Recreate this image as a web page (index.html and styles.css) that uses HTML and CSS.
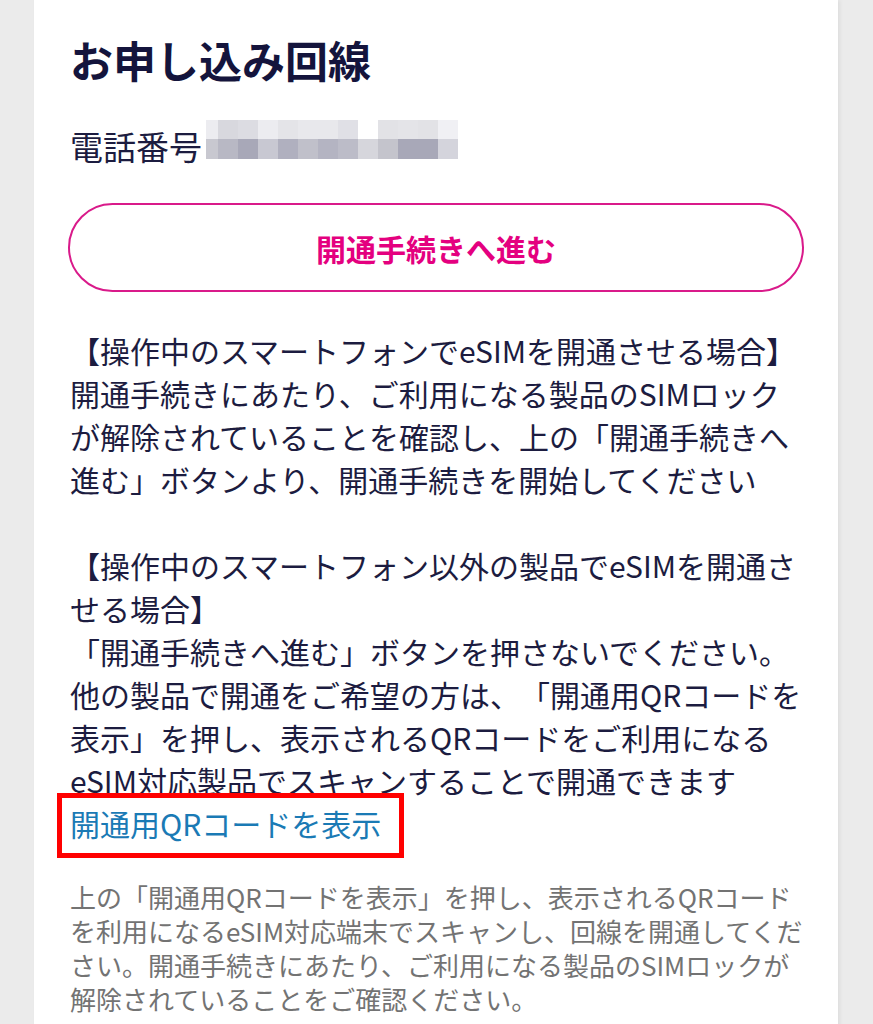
FILE: index.html
```html
<!DOCTYPE html>
<html lang="ja">
<head>
<meta charset="utf-8">
<title>お申し込み回線</title>
<link rel="stylesheet" href="styles.css">
</head>
<body>
<main class="card">
  <h1 class="title">お申し込み回線</h1>
  <div class="phone">
    <span class="phone-label">電話番号</span>
    <span class="redact" aria-hidden="true">
      <i style="background:#ececf0"></i><i style="background:#d8d8de"></i><i style="background:#dcdce2"></i><i style="background:#ececf0"></i><i style="background:#e4e4e8"></i><i style="background:#e8e8ec"></i><i style="background:#e8e8ec"></i><i style="background:#e0e0e6"></i><i style="background:#ffffff"></i><i style="background:#e2e2e6"></i><i style="background:#e4e4e8"></i><i style="background:#e2e2e6"></i><i style="background:#f0f0f4"></i>
      <i style="background:#c8c8d0"></i><i style="background:#b8b8c4"></i><i style="background:#a8a8b8"></i><i style="background:#c8c8d2"></i><i style="background:#b0b0bf"></i><i style="background:#c0c0ca"></i><i style="background:#b4b4c2"></i><i style="background:#bcbcc8"></i><i style="background:#d6d6dc"></i><i style="background:#c4c4cc"></i><i style="background:#a8a8b8"></i><i style="background:#a8a8b8"></i><i style="background:#d4d4dc"></i>
    </span>
  </div>
  <button class="btn" type="button">開通手続きへ進む</button>
  <div class="body">
    <p>【操作中のスマートフォンでeSIMを開通させる場合】<br>開通手続きにあたり、ご利用になる製品のSIMロックが解除されていることを確認し、上の「開通手続きへ進む」ボタンより、開通手続きを開始してください</p>
    <p>【操作中のスマートフォン以外の製品でeSIMを開通させる場合】<br>「開通手続きへ進む」ボタンを押さないでください。他の製品で開通をご希望の方は、「開通用QRコードを表示」を押し、表示されるQRコードをご利用になるeSIM対応製品でスキャンすることで開通できます<br><a class="link" href="#">開通用QRコードを表示</a></p>
  </div>
  <p class="note">上の「開通用QRコードを表示」を押し、表示されるQRコードを利用になるeSIM対応端末でスキャンし、回線を開通してください。開通手続きにあたり、ご利用になる製品のSIMロックが解除されていることをご確認ください。</p>
</main>
</body>
</html>
```

FILE: styles.css
```css
html, body {
  margin: 0;
  padding: 0;
}
body {
  background: #ebebeb;
  font-family: "Noto Sans CJK JP", "Noto Sans", sans-serif;
  color: #1c1c40;
  overflow: hidden;
  height: 1024px;
  text-spacing-trim: space-all;
}
.card {
  margin-left: 34px;
  width: 804px;
  min-height: 1100px;
  box-sizing: border-box;
  background: #ffffff;
  padding: 32px 34px 0 36px;
  box-shadow: 2px 0 4px rgba(0,0,0,0.06);
}
.title {
  margin: 0;
  font-size: 43px;
  line-height: 55px;
  font-weight: 700;
  color: #14143c;
}
.phone {
  margin-top: 37px;
  display: flex;
  align-items: center;
  height: 44px;
}
.phone-label {
  font-size: 33px;
  line-height: 44px;
  color: #1c1c40;
}
.redact {
  margin-left: 4px;
  display: grid;
  grid-template-columns: 12px repeat(12, 20px);
  grid-template-rows: 19px 20px;
  align-self: flex-start;
  margin-top: -4px;
}
.redact i {
  display: block;
}
.btn {
  display: block;
  margin: 35px 0 0 -2px;
  width: 736px;
  height: 89px;
  border: 2px solid #d91a8a;
  border-radius: 45px;
  background: #ffffff;
  color: #e4007f;
  font-family: inherit;
  font-size: 30px;
  font-weight: 700;
  padding: 0;
  cursor: pointer;
}
.body {
  margin-top: 37px;
  font-size: 30px;
  line-height: 43px;
  color: #1c1c40;
}
.body p {
  margin: 0;
}
.body p + p {
  margin-top: 43px;
}
.link {
  position: relative;
  display: inline-block;
  color: #1a7ab5;
  text-decoration: none;
}
.link::after {
  content: "";
  position: absolute;
  left: -13px;
  right: -23px;
  top: -9px;
  bottom: -13px;
  border: 5px solid #ff0000;
}
.note {
  margin: 35px 0 0;
  font-size: 26px;
  line-height: 34px;
  color: #737373;
}
```
